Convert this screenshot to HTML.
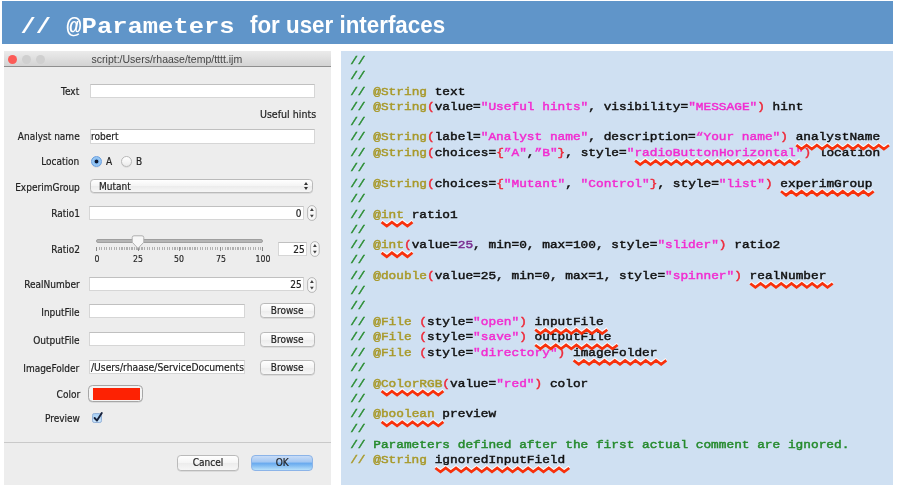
<!DOCTYPE html>
<html>
<head>
<meta charset="utf-8">
<title>// @Parameters for user interfaces</title>
<style>
*{box-sizing:border-box;margin:0;padding:0}
html,body{width:900px;height:486px;overflow:hidden;background:#fff}
body{position:relative;font-family:"Liberation Sans",sans-serif}
.abs{position:absolute}
#hdr{position:absolute;left:2px;top:1px;width:891px;height:43px;background:#6095c9}
#hdr .mono{filter:blur(0.4px);position:absolute;left:18.4px;top:11px;font-family:"Liberation Mono",monospace;font-weight:bold;font-size:25.5px;line-height:30px;color:#fff;white-space:pre;transform-origin:0 21.8px;transform:scaleY(.885)}
#hdr .sans{filter:blur(0.4px);position:absolute;left:248px;top:8.6px;font-family:"Liberation Sans",sans-serif;font-weight:bold;font-size:23px;line-height:30px;color:#fff;white-space:pre;transform-origin:0 0;transform:scaleX(0.972)}
/* dialog */
#dlg{filter:blur(0.45px);position:absolute;left:4px;top:51px;width:327px;height:434px;background:#ededed;overflow:hidden}
#tb{position:absolute;left:0;top:0;width:327px;height:16px;background:linear-gradient(#ebebeb,#d3d3d3);border-bottom:1px solid #8f8f8f}
#tb .t{position:absolute;left:87.6px;top:2px;font-size:10.5px;line-height:12px;color:#444;white-space:pre}
.dot{position:absolute;top:3.5px;width:9px;height:9px;border-radius:50%}
.lbl{position:absolute;right:251.4px;font-family:"DejaVu Sans","Liberation Sans",sans-serif;font-size:10px;line-height:12px;color:#222;-webkit-text-stroke:0.2px currentColor;white-space:pre;text-align:right;transform-origin:100% 50%;transform:scaleX(.9)}
.s{display:inline-block;-webkit-text-stroke:0.2px currentColor;font-family:"DejaVu Sans","Liberation Sans",sans-serif;font-size:10px;white-space:pre;transform:scaleX(.9);transform-origin:50% 50%}
.s.lf{transform-origin:0 50%}
.s.rt{transform-origin:100% 50%}
.fld{position:absolute;background:#fff;border:1px solid #d6d6d6;border-top-color:#c0c0c0;height:14px;font-size:10.2px;line-height:12px;color:#222;white-space:pre;padding:0.8px 0.4px 0}
.btn{position:absolute;height:14.5px;border:1px solid #bababa;border-radius:3.8px;background:linear-gradient(#ffffff,#f4f4f4 50%,#ececec 51%,#f6f6f6);font-size:10.2px;line-height:12.5px;color:#222;text-align:center;box-shadow:0 0.5px 0.5px rgba(0,0,0,.15)}
.stp{position:absolute}

.txt{-webkit-text-stroke:0.2px currentColor;position:absolute;font-family:"DejaVu Sans","Liberation Sans",sans-serif;font-size:10px;line-height:12px;color:#222;white-space:pre;transform-origin:0 50%;transform:scaleX(.9)}
.fld.num{text-align:right;padding-right:1.5px}
.radio{position:absolute;width:11.2px;height:11.2px;border-radius:50%;border:1px solid #b9b9b9;background:linear-gradient(#ffffff,#ebebeb);box-shadow:0 0.5px 0.6px rgba(0,0,0,.12)}
.radio.on{border-color:#6b9fe0;background:radial-gradient(circle at 50% 50%,#0c1830 0,#0c1830 1.4px,#7db4ee 2.3px,#9ccbf4 3.6px,#6ea8ea 100%)}
.btn.sel{text-align:left;padding-left:7.4px;line-height:13.2px}
.btn.sel i{position:absolute;right:3.6px;top:2.2px;width:0;height:0;border:2px solid transparent;border-bottom:3px solid #333;border-top:0}
.btn.sel i:after{content:"";position:absolute;left:-2px;top:4.8px;border:2px solid transparent;border-top:3px solid #333;border-bottom:0}
.track{position:absolute;left:92px;top:188px;width:166.6px;height:3.8px;border-radius:2px;background:#b4b4b4;border:0.5px solid #9f9f9f}
.ticks{position:absolute;left:92.2px;top:196.4px;width:166px;height:2.4px;background:repeating-linear-gradient(90deg,#9a9a9a 0,#9a9a9a 0.8px,transparent 0.8px,transparent 1.656px);opacity:.75}
.mt{position:absolute;top:195.9px;width:1px;height:3.8px;background:#8a8a8a}
.thumb{position:absolute;left:127px;top:184.4px}
.tl{-webkit-text-stroke:0.15px currentColor;position:absolute;top:203.2px;width:20px;text-align:center;font-family:"DejaVu Sans","Liberation Sans",sans-serif;font-size:8.7px;line-height:10px;color:#222;transform:scaleX(.9)}
.btn.clr{background:#f3f3f3;border-color:#a6a6a6;border-radius:4.5px}
.sw{position:absolute;left:3.5px;top:1.8px;width:46.8px;height:11.8px;background:#fd2203}
.chk{position:absolute;left:88.2px;top:362.4px;width:9.8px;height:9.8px;border:1px solid #93b1d8;border-radius:2.2px;background:linear-gradient(#a6cef4,#c9e4fb)}
.ck{position:absolute;left:88px;top:358.6px}
.sep{position:absolute;left:0;top:390.6px;width:327px;height:1px;background:#c9c9c9}
.btn.ok{border-color:#8cb4e8;border-radius:4px;background:linear-gradient(#c8dcf7 0%,#a5c8f2 40%,#6aabef 54%,#86bff3 72%,#b8e0fa 100%);box-shadow:none}
/* code */
#code{filter:blur(0.45px);position:absolute;left:341px;top:51px;width:551.5px;height:434px;background:#cfe0f2}
#code pre{position:absolute;left:9.2px;top:2.34px;font-family:"Liberation Mono",monospace;font-weight:normal;-webkit-text-stroke:0.5px currentColor;font-size:12.8px;line-height:17.27px;color:#111;white-space:pre;transform-origin:0 0;transform:scaleY(.89)}
.g{color:#258a2c}.o{color:#a8992a}.r{color:#ee2a3a}.m{color:#f22bd0}.p{color:#7a2c90}
.zz{position:absolute;left:0;top:0}
.zz polyline{fill:none;stroke:#f8310c;stroke-width:2.7;stroke-linejoin:miter;stroke-linecap:butt}
.zz .hl polyline{stroke:#fff;stroke-width:2.7;opacity:.9}
</style>
</head>
<body>
<div id="hdr"><span class="mono">// @Parameters</span><span class="sans">for user interfaces</span></div>

<div id="dlg">
  <div id="tb">
    <span class="dot" style="left:3.5px;background:#fc5b57"></span>
    <span class="dot" style="left:18px;background:#cfcfcf"></span>
    <span class="dot" style="left:32.3px;background:#cfcfcf"></span>
    <span class="t">script:/Users/rhaase/temp/tttt.ijm</span>
  </div>

  <span class="lbl" style="top:35px">Text</span>
  <div class="fld" style="left:85.5px;top:32.7px;width:225px;height:14.6px"></div>
  <span class="lbl" style="top:57.5px;right:15.2px;transform:scaleX(.95)">Useful hints</span>

  <span class="lbl" style="top:79.5px">Analyst name</span>
  <div class="fld" style="left:85.5px;top:77.7px;width:225px;height:15px;padding-top:1.6px"><span class="s lf">robert</span></div>

  <span class="lbl" style="top:105.2px">Location</span>
  <span class="radio on" style="left:87.3px;top:105px"></span>
  <span class="txt" style="left:101.6px;top:104.9px">A</span>
  <span class="radio" style="left:117px;top:105px"></span>
  <span class="txt" style="left:131.8px;top:104.9px">B</span>

  <span class="lbl" style="top:130.5px">ExperimGroup</span>
  <div class="btn sel" style="left:86.4px;top:128.1px;width:222.4px;height:14.4px"><span class="s lf">Mutant</span><i></i></div>

  <span class="lbl" style="top:156.7px">Ratio1</span>
  <div class="fld num" style="left:85.4px;top:155.1px;width:214.8px"><span class="s rt">0</span></div>
  <svg class="stp" style="left:302.5px;top:154px" width="10" height="17" viewBox="0 0 10 17"><rect x="0.6" y="1.1" width="8.6" height="14.8" rx="4.3" fill="#d9d9d9" opacity=".6"/><rect x="0.6" y="0.6" width="8.6" height="14.8" rx="4.3" fill="#f7f7f7" stroke="#b0b0b0" stroke-width="0.9"/><path d="M4.9 3 L6.8 5.9 H3 Z M4.9 12.6 L6.8 9.7 H3 Z" fill="#404040"/></svg>

  <span class="lbl" style="top:193px">Ratio2</span>
  <div class="track"></div>
  <div class="ticks"></div>
  <i class="mt" style="left:92.2px"></i><i class="mt" style="left:133.6px"></i><i class="mt" style="left:175px"></i><i class="mt" style="left:216.4px"></i><i class="mt" style="left:257.8px"></i>
  <svg class="thumb" width="14" height="15" viewBox="0 0 14 15"><path d="M1.2 2.6 Q1.2 0.8 3 0.8 H11 Q12.8 0.8 12.8 2.6 V7.2 L7 13.4 L1.2 7.2 Z" fill="#f7f7f7" stroke="#a8a8a8" stroke-width="0.9"/></svg>
  <span class="tl" style="left:82.5px">0</span><span class="tl" style="left:123.9px">25</span><span class="tl" style="left:165.3px">50</span><span class="tl" style="left:206.9px">75</span><span class="tl" style="left:248.9px">100</span>
  <div class="fld num" style="left:273.8px;top:191.2px;width:29.6px;height:13.6px"><span class="s rt">25</span></div>
  <svg class="stp" style="left:305.8px;top:189.6px" width="10" height="17" viewBox="0 0 10 17"><rect x="0.6" y="1.1" width="8.6" height="14.8" rx="4.3" fill="#d9d9d9" opacity=".6"/><rect x="0.6" y="0.6" width="8.6" height="14.8" rx="4.3" fill="#f7f7f7" stroke="#b0b0b0" stroke-width="0.9"/><path d="M4.9 3 L6.8 5.9 H3 Z M4.9 12.6 L6.8 9.7 H3 Z" fill="#404040"/></svg>

  <span class="lbl" style="top:227.5px">RealNumber</span>
  <div class="fld num" style="left:85.4px;top:226.4px;width:214.8px"><span class="s rt">25</span></div>
  <svg class="stp" style="left:302.5px;top:225.8px" width="10" height="17" viewBox="0 0 10 17"><rect x="0.6" y="1.1" width="8.6" height="14.8" rx="4.3" fill="#d9d9d9" opacity=".6"/><rect x="0.6" y="0.6" width="8.6" height="14.8" rx="4.3" fill="#f7f7f7" stroke="#b0b0b0" stroke-width="0.9"/><path d="M4.9 3 L6.8 5.9 H3 Z M4.9 12.6 L6.8 9.7 H3 Z" fill="#404040"/></svg>

  <span class="lbl" style="top:255.8px">InputFile</span>
  <div class="fld" style="left:85.4px;top:252.7px;width:156px"></div>
  <div class="btn" style="left:256.4px;top:252.2px;width:54.6px;height:15.2px;line-height:13.3px"><span class="s">Browse</span></div>

  <span class="lbl" style="top:283.8px">OutputFile</span>
  <div class="fld" style="left:85.4px;top:281px;width:156px"></div>
  <div class="btn" style="left:256.4px;top:280.8px;width:54.6px;height:15.2px;line-height:13.3px"><span class="s">Browse</span></div>

  <span class="lbl" style="top:311.7px">ImageFolder</span>
  <div class="fld" style="left:85.4px;top:309.4px;width:156px"><span class="s lf" style="transform:scaleX(.922)">/Users/rhaase/ServiceDocuments</span></div>
  <div class="btn" style="left:256.4px;top:309.2px;width:54.6px;height:15.2px;line-height:13.3px"><span class="s">Browse</span></div>

  <span class="lbl" style="top:338px">Color</span>
  <div class="btn clr" style="left:84.3px;top:334.2px;width:55px;height:16.4px"><b class="sw"></b></div>

  <span class="lbl" style="top:361.5px">Preview</span>
  <span class="chk"></span>
  <svg class="ck" width="12" height="14" viewBox="0 0 12 14"><path d="M2.6 8 L5 10.6 L9.8 3" fill="none" stroke="#16203a" stroke-width="1.9" stroke-linecap="round" stroke-linejoin="round"/></svg>

  <div class="sep"></div>
  <div class="btn" style="left:173px;top:404.2px;width:62px;height:15.4px;line-height:14.2px"><span class="s">Cancel</span></div>
  <div class="btn ok" style="left:246.5px;top:403.8px;width:62.6px;height:16.2px;line-height:14px"><span class="s">OK</span></div>
</div>

<div id="code"><pre><span class="g">//</span>
<span class="g">//</span>
<span class="g">//</span> <span class="o">@String</span> text
<span class="g">//</span> <span class="o">@String</span><span class="r">(</span>value=<span class="m">"Useful hints"</span>, visibility=<span class="m">"MESSAGE"</span><span class="r">)</span> hint
<span class="g">//</span>
<span class="g">//</span> <span class="o">@String</span><span class="r">(</span>label=<span class="m">"Analyst name"</span>, description=<span class="m">“Your name"</span><span class="r">)</span> <span class="w">analystName</span>
<span class="g">//</span> <span class="o">@String</span><span class="r">(</span>choices=<span class="r">{</span><span class="m">”A"</span>,<span class="m">”B"</span><span class="r">}</span>, style=<span class="m">"<span class="w">radioButtonHorizontal</span>"</span><span class="r">)</span> location
<span class="g">//</span>
<span class="g">//</span> <span class="o">@String</span><span class="r">(</span>choices=<span class="r">{</span><span class="m">"Mutant"</span>, <span class="m">"Control"</span><span class="r">}</span>, style=<span class="m">"list"</span><span class="r">)</span> <span class="w">experimGroup</span>
<span class="g">//</span>
<span class="g">//</span> <span class="o">@<span class="w">int</span></span> ratio1
<span class="g">//</span>
<span class="g">//</span> <span class="o">@<span class="w">int</span></span><span class="r">(</span>value=<span class="p">25</span>, min=0, max=100, style=<span class="m">"slider"</span><span class="r">)</span> ratio2
<span class="g">//</span>
<span class="g">//</span> <span class="o">@double</span><span class="r">(</span>value=25, min=0, max=1, style=<span class="m">"spinner"</span><span class="r">)</span> <span class="w">realNumber</span>
<span class="g">//</span>
<span class="g">//</span>
<span class="g">//</span> <span class="o">@File</span> <span class="r">(</span>style=<span class="m">"open"</span><span class="r">)</span> <span class="w">inputFile</span>
<span class="g">//</span> <span class="o">@File</span> <span class="r">(</span>style=<span class="m">"save"</span><span class="r">)</span> <span class="w">outputFile</span>
<span class="g">//</span> <span class="o">@File</span> <span class="r">(</span>style=<span class="m">"directory"</span><span class="r">)</span> <span class="w">imageFolder</span>
<span class="g">//</span>
<span class="g">//</span> <span class="o">@<span class="w">ColorRGB</span></span><span class="r">(</span>value=<span class="m">"red"</span><span class="r">)</span> color
<span class="g">//</span>
<span class="g">//</span> <span class="o">@<span class="w">boolean</span></span> preview
<span class="g">//</span>
<span class="g">// Parameters defined after the first actual comment are ignored.</span>
<span class="o">// @String</span> <span class="w">ignoredInputField</span></pre><!--SQ--><svg class="zz" width="552" height="434" viewBox="0 0 552 434"><g class="hl" transform="translate(0,-1.3)">
<polyline points="455.3,94.2 460.5,98.1 465.6,94.2 470.8,98.1 475.9,94.2 481.1,98.1 486.2,94.2 491.4,98.1 496.5,94.2 501.7,98.1 506.8,94.2 512.0,98.1 517.1,94.2 522.3,98.1 527.4,94.2 532.6,98.1 537.7,94.2 542.9,98.1 548.0,94.2"/>
<polyline points="294.1,109.6 299.2,113.5 304.4,109.6 309.5,113.5 314.7,109.6 319.8,113.5 325.0,109.6 330.1,113.5 335.3,109.6 340.4,113.5 345.6,109.6 350.7,113.5 355.9,109.6 361.0,113.5 366.2,109.6 371.3,113.5 376.5,109.6 381.6,113.5 386.8,109.6 391.9,113.5 397.1,109.6 402.2,113.5 407.4,109.6 412.5,113.5 417.7,109.6 422.8,113.5 428.0,109.6 433.1,113.5 438.3,109.6 443.4,113.5 448.6,109.6 453.7,113.5 458.9,109.6"/>
<polyline points="440.0,140.3 445.1,144.2 450.3,140.3 455.4,144.2 460.6,140.3 465.7,144.2 470.9,140.3 476.0,144.2 481.2,140.3 486.3,144.2 491.5,140.3 496.6,144.2 501.8,140.3 506.9,144.2 512.1,140.3 517.2,144.2 522.4,140.3 527.5,144.2 532.7,140.3"/>
<polyline points="40.6,171.1 45.8,175.0 50.9,171.1 56.1,175.0 61.2,171.1 66.4,175.0 71.5,171.1"/>
<polyline points="40.6,201.8 45.8,205.7 50.9,201.8 56.1,205.7 61.2,201.8 66.4,205.7 71.5,201.8"/>
<polyline points="409.3,232.5 414.4,236.4 419.6,232.5 424.7,236.4 429.9,232.5 435.0,236.4 440.2,232.5 445.3,236.4 450.5,232.5 455.6,236.4 460.8,232.5 465.9,236.4 471.1,232.5 476.2,236.4 481.4,232.5 486.5,236.4 491.7,232.5"/>
<polyline points="194.2,278.7 199.4,282.6 204.5,278.7 209.7,282.6 214.8,278.7 220.0,282.6 225.1,278.7 230.3,282.6 235.4,278.7 240.6,282.6 245.7,278.7 250.9,282.6 256.0,278.7 261.2,282.6 266.3,278.7"/>
<polyline points="194.2,294.0 199.4,297.9 204.5,294.0 209.7,297.9 214.8,294.0 220.0,297.9 225.1,294.0 230.3,297.9 235.4,294.0 240.6,297.9 245.7,294.0 250.9,297.9 256.0,294.0 261.2,297.9 266.3,294.0 271.5,297.9 276.6,294.0"/>
<polyline points="232.6,309.4 237.8,313.3 242.9,309.4 248.1,313.3 253.2,309.4 258.4,313.3 263.5,309.4 268.7,313.3 273.8,309.4 279.0,313.3 284.1,309.4 289.3,313.3 294.4,309.4 299.6,313.3 304.7,309.4 309.9,313.3 315.0,309.4 320.2,313.3 325.3,309.4"/>
<polyline points="40.6,340.1 45.8,344.0 50.9,340.1 56.1,344.0 61.2,340.1 66.4,344.0 71.5,340.1 76.7,344.0 81.8,340.1 87.0,344.0 92.1,340.1 97.3,344.0 102.4,340.1"/>
<polyline points="40.6,370.9 45.8,374.8 50.9,370.9 56.1,374.8 61.2,370.9 66.4,374.8 71.5,370.9 76.7,374.8 81.8,370.9 87.0,374.8 92.1,370.9 97.3,374.8 102.4,370.9"/>
<polyline points="94.4,417.0 99.5,420.9 104.7,417.0 109.8,420.9 115.0,417.0 120.1,420.9 125.3,417.0 130.4,420.9 135.6,417.0 140.7,420.9 145.9,417.0 151.0,420.9 156.2,417.0 161.3,420.9 166.5,417.0 171.6,420.9 176.8,417.0 181.9,420.9 187.1,417.0 192.2,420.9 197.4,417.0 202.5,420.9 207.7,417.0 212.8,420.9 218.0,417.0 223.1,420.9 228.3,417.0"/>
</g><g>
<polyline points="455.3,94.2 460.5,98.1 465.6,94.2 470.8,98.1 475.9,94.2 481.1,98.1 486.2,94.2 491.4,98.1 496.5,94.2 501.7,98.1 506.8,94.2 512.0,98.1 517.1,94.2 522.3,98.1 527.4,94.2 532.6,98.1 537.7,94.2 542.9,98.1 548.0,94.2"/>
<polyline points="294.1,109.6 299.2,113.5 304.4,109.6 309.5,113.5 314.7,109.6 319.8,113.5 325.0,109.6 330.1,113.5 335.3,109.6 340.4,113.5 345.6,109.6 350.7,113.5 355.9,109.6 361.0,113.5 366.2,109.6 371.3,113.5 376.5,109.6 381.6,113.5 386.8,109.6 391.9,113.5 397.1,109.6 402.2,113.5 407.4,109.6 412.5,113.5 417.7,109.6 422.8,113.5 428.0,109.6 433.1,113.5 438.3,109.6 443.4,113.5 448.6,109.6 453.7,113.5 458.9,109.6"/>
<polyline points="440.0,140.3 445.1,144.2 450.3,140.3 455.4,144.2 460.6,140.3 465.7,144.2 470.9,140.3 476.0,144.2 481.2,140.3 486.3,144.2 491.5,140.3 496.6,144.2 501.8,140.3 506.9,144.2 512.1,140.3 517.2,144.2 522.4,140.3 527.5,144.2 532.7,140.3"/>
<polyline points="40.6,171.1 45.8,175.0 50.9,171.1 56.1,175.0 61.2,171.1 66.4,175.0 71.5,171.1"/>
<polyline points="40.6,201.8 45.8,205.7 50.9,201.8 56.1,205.7 61.2,201.8 66.4,205.7 71.5,201.8"/>
<polyline points="409.3,232.5 414.4,236.4 419.6,232.5 424.7,236.4 429.9,232.5 435.0,236.4 440.2,232.5 445.3,236.4 450.5,232.5 455.6,236.4 460.8,232.5 465.9,236.4 471.1,232.5 476.2,236.4 481.4,232.5 486.5,236.4 491.7,232.5"/>
<polyline points="194.2,278.7 199.4,282.6 204.5,278.7 209.7,282.6 214.8,278.7 220.0,282.6 225.1,278.7 230.3,282.6 235.4,278.7 240.6,282.6 245.7,278.7 250.9,282.6 256.0,278.7 261.2,282.6 266.3,278.7"/>
<polyline points="194.2,294.0 199.4,297.9 204.5,294.0 209.7,297.9 214.8,294.0 220.0,297.9 225.1,294.0 230.3,297.9 235.4,294.0 240.6,297.9 245.7,294.0 250.9,297.9 256.0,294.0 261.2,297.9 266.3,294.0 271.5,297.9 276.6,294.0"/>
<polyline points="232.6,309.4 237.8,313.3 242.9,309.4 248.1,313.3 253.2,309.4 258.4,313.3 263.5,309.4 268.7,313.3 273.8,309.4 279.0,313.3 284.1,309.4 289.3,313.3 294.4,309.4 299.6,313.3 304.7,309.4 309.9,313.3 315.0,309.4 320.2,313.3 325.3,309.4"/>
<polyline points="40.6,340.1 45.8,344.0 50.9,340.1 56.1,344.0 61.2,340.1 66.4,344.0 71.5,340.1 76.7,344.0 81.8,340.1 87.0,344.0 92.1,340.1 97.3,344.0 102.4,340.1"/>
<polyline points="40.6,370.9 45.8,374.8 50.9,370.9 56.1,374.8 61.2,370.9 66.4,374.8 71.5,370.9 76.7,374.8 81.8,370.9 87.0,374.8 92.1,370.9 97.3,374.8 102.4,370.9"/>
<polyline points="94.4,417.0 99.5,420.9 104.7,417.0 109.8,420.9 115.0,417.0 120.1,420.9 125.3,417.0 130.4,420.9 135.6,417.0 140.7,420.9 145.9,417.0 151.0,420.9 156.2,417.0 161.3,420.9 166.5,417.0 171.6,420.9 176.8,417.0 181.9,420.9 187.1,417.0 192.2,420.9 197.4,417.0 202.5,420.9 207.7,417.0 212.8,420.9 218.0,417.0 223.1,420.9 228.3,417.0"/>
</g></svg><!--/SQ--></div>
</body>
</html>
